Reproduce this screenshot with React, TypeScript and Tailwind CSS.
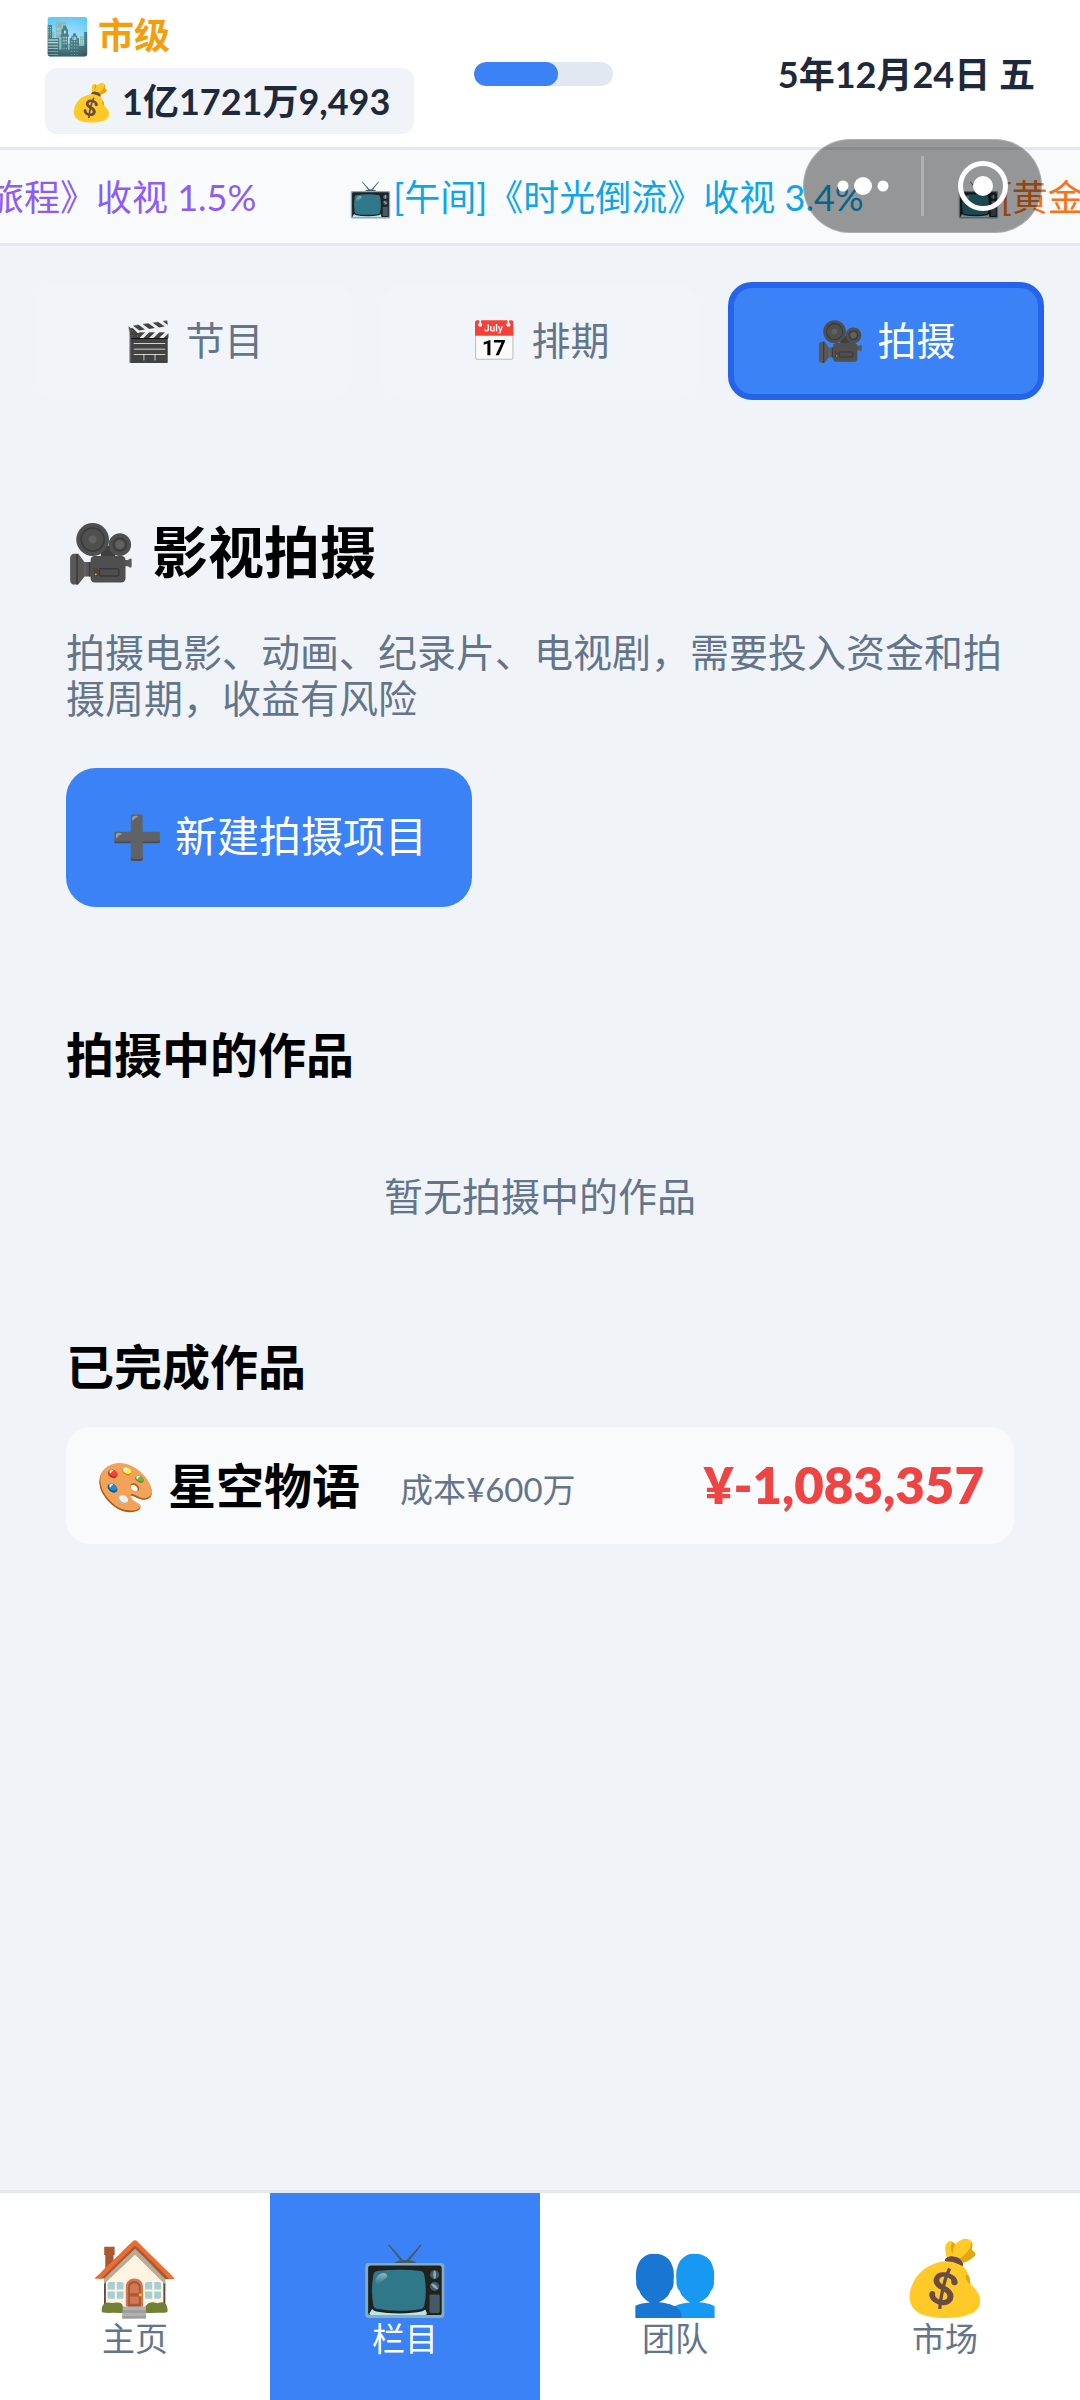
import { useState } from "react";
import clsx from "clsx";

type Tab = { id: string; icon: string; label: string };

const TABS: Tab[] = [
  { id: "program", icon: "🎬", label: "节目" },
  { id: "schedule", icon: "📅", label: "排期" },
  { id: "shooting", icon: "🎥", label: "拍摄" },
];

const NAV: Tab[] = [
  { id: "home", icon: "🏠", label: "主页" },
  { id: "column", icon: "📺", label: "栏目" },
  { id: "team", icon: "👥", label: "团队" },
  { id: "market", icon: "💰", label: "市场" },
];

const WORKS = [{ icon: "🎨", name: "星空物语", cost: "成本¥600万", income: "¥-1,083,357" }];

export default function App() {
  const [tab, setTab] = useState("shooting");
  const [nav, setNav] = useState("column");

  return (
    <div className="relative flex min-h-screen flex-col overflow-hidden bg-[#f0f4f8] font-['Lato','Noto_Sans_CJK_SC',sans-serif] text-black">
      <StatusBar progress={60} />
      <Ticker />
      <Capsule />

      <div className="grid grid-cols-3 gap-[30px] px-9 pt-9">
        {TABS.map((item) => (
          <button
            key={item.id}
            type="button"
            onClick={() => setTab(item.id)}
            className={clsx(
              "flex h-[118px] items-center justify-center gap-3 rounded-3xl border-[6px] pb-[2px] text-[39px]",
              tab === item.id
                ? "border-[#2563eb] bg-[#3b82f6] text-white"
                : "border-transparent bg-[#f1f5f9] text-[#64748b]"
            )}
          >
            <span>{item.icon}</span>
            <span>{item.label}</span>
          </button>
        ))}
      </div>

      <main className="flex-1 px-[66px] pt-[116px]">
        <h1 className="flex items-center gap-4 text-[56px] leading-[72px] font-bold">
          <span>🎥</span>
          <span>影视拍摄</span>
        </h1>
        <p className="mt-[41px] text-[39px] leading-[46px] text-[#64748b]">
          拍摄电影、动画、纪录片、电视剧，需要投入资金和拍摄周期，收益有风险
        </p>
        <button
          type="button"
          className="mt-[47px] flex h-[139px] items-center gap-3 rounded-[30px] bg-[#3b82f6] px-[45px] pb-[2px] text-[42px] text-white"
        >
          <span>➕</span>
          <span>新建拍摄项目</span>
        </button>

        <h2 className="mt-[118px] text-[48px] leading-[60px] font-bold">拍摄中的作品</h2>
        <p className="pt-[84px] pb-[86px] text-center text-[39px] leading-[54px] text-[#64748b]">暂无拍摄中的作品</p>

        <h2 className="mt-[28px] text-[48px] leading-[60px] font-bold">已完成作品</h2>
        <ul className="mt-[30px]">
          {WORKS.map((work) => (
            <li key={work.name} className="flex h-[117px] items-center rounded-3xl bg-[#f8fafc] px-[30px]">
              <span className="text-[48px] font-bold">{work.icon}</span>
              <span className="ml-3 text-[48px] font-bold">{work.name}</span>
              <span className="ml-10 pt-2 text-[33px] text-[#64748b]">{work.cost}</span>
              <span className="ml-auto text-[51px] font-extrabold text-[#ef4444]">{work.income}</span>
            </li>
          ))}
        </ul>
      </main>

      <nav className="grid grid-cols-4 border-t-[3px] border-[#e2e8f0] bg-white">
        {NAV.map((item) => (
          <button
            key={item.id}
            type="button"
            onClick={() => setNav(item.id)}
            className={clsx(
              "flex h-[207px] flex-col items-center pt-10",
              nav === item.id ? "bg-[#3b82f6] text-white" : "text-[#64748b]"
            )}
          >
            <span className="text-[72px] leading-[84px]">{item.icon}</span>
            <span className="text-[33px] leading-[42px]">{item.label}</span>
          </button>
        ))}
      </nav>
    </div>
  );
}

function StatusBar({ progress }: { progress: number }) {
  return (
    <header className="flex h-[150px] items-center gap-[60px] border-b-[3px] border-[#e2e8f0] bg-white px-[45px] text-[36px] font-bold text-[#1e293b]">
      <div className="flex flex-col items-start gap-3">
        <div className="flex items-center gap-2 leading-[42px] text-[#f59e0b]">
          <span>🏙️</span>
          <span>市级</span>
        </div>
        <div className="flex h-[66px] items-center gap-2 rounded-xl bg-[#f0f4f8] px-6">
          <span>💰</span>
          <span>1亿1721万9,493</span>
        </div>
      </div>
      <div className="h-6 w-[139px] overflow-hidden rounded-full bg-[#e2e8f0]">
        <div className="h-full rounded-full bg-[#3b82f6]" style={{ width: `${progress}%` }} />
      </div>
      <div className="ml-auto">5年12月24日 五</div>
    </header>
  );
}

function Ticker() {
  return (
    <div className="flex h-24 items-center gap-[92px] overflow-hidden border-b-[3px] border-[#e2e8f0] bg-[#f8fafc] text-[36px] whitespace-nowrap">
      <span className="-ml-3 shrink-0 text-[#8b5cf6]">旅程》收视 1.5%</span>
      <span className="shrink-0 text-[#0ea5e9]">📺[午间]《时光倒流》收视 3.4%</span>
      <span className="shrink-0 text-[#f97316]">📺[黄金</span>
    </div>
  );
}

// floating "more / close" capsule over the ticker
function Capsule() {
  return (
    <div className="absolute top-[139px] right-[38px] flex h-[94px] w-[239px] items-center rounded-full border border-white/20 bg-black/40">
      <button type="button" aria-label="更多" className="flex flex-1 items-center justify-center">
        <svg width="52" height="20" viewBox="0 0 52 20" fill="white">
          <circle cx="6" cy="10" r="5.5" />
          <circle cx="26" cy="10" r="9" />
          <circle cx="46" cy="10" r="5.5" />
        </svg>
      </button>
      <span className="h-[60px] w-[3px] bg-white/25" />
      <button type="button" aria-label="关闭" className="flex flex-1 items-center justify-center">
        <svg width="50" height="50" viewBox="0 0 50 50">
          <circle cx="25" cy="25" r="22.5" fill="none" stroke="white" strokeWidth="5" />
          <circle cx="25" cy="25" r="10" fill="white" />
        </svg>
      </button>
    </div>
  );
}
